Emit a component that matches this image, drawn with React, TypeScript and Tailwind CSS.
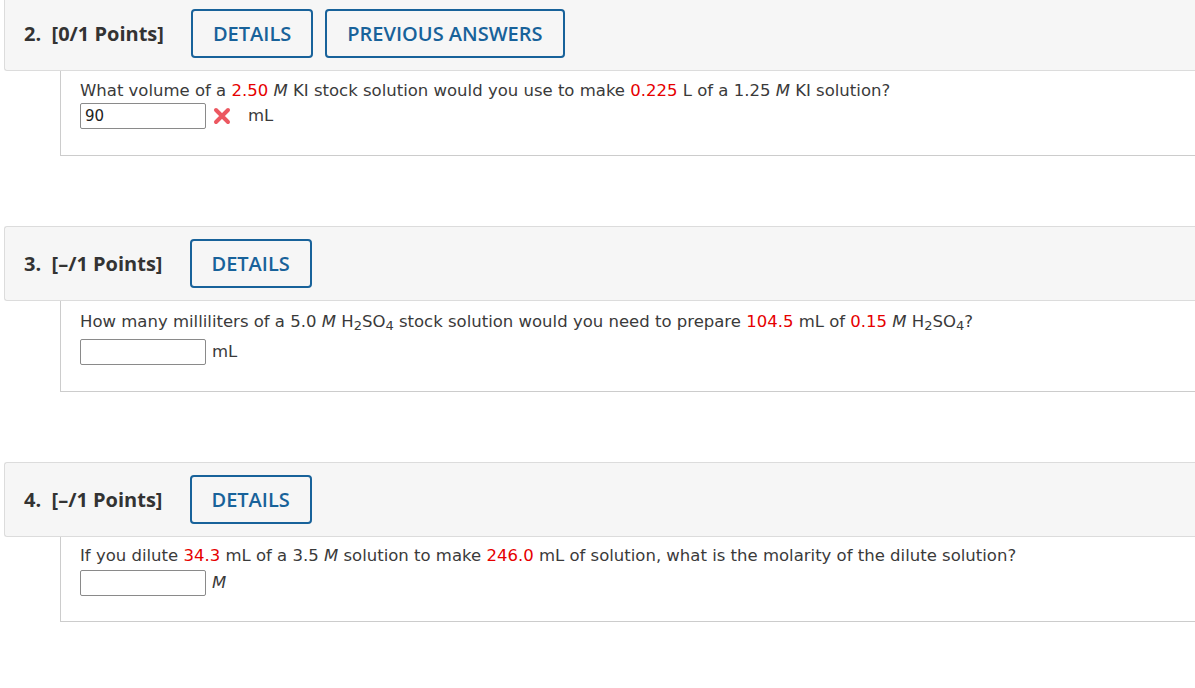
import React from 'react';

const body = { fontFamily: '"DejaVu Sans", Verdana, sans-serif' };
const head = { fontFamily: '"Open Sans", "Liberation Sans", sans-serif' };

function Red({ children }: { children: React.ReactNode }) {
  return <span className="text-[#e60000]">{children}</span>;
}

function M() {
  return <i>M</i>;
}

function H2SO4() {
  return (
    <span>
      H<sub className="text-[13px] leading-none">2</sub>SO<sub className="text-[13px] leading-none">4</sub>
    </span>
  );
}

function WrongMark() {
  return (
    <svg width="18" height="18" viewBox="0 0 18 18" className="ml-[7px]">
      <path d="M3 3 L15 15 M15 3 L3 15" stroke="#ec5861" strokeWidth="4" strokeLinecap="round" />
    </svg>
  );
}

function Header({ num, score, buttons }: { num: number; score: string; buttons: string[] }) {
  return (
    <div
      className="ml-[4px] flex h-[75px] items-center rounded-l-[3px] border border-r-0 border-[#dcdcdc] bg-[#f6f6f6] pl-[19px]"
      style={head}
    >
      <span className="text-[20px] font-bold text-[#333]">
        {num}.&nbsp; [{score} Points]
      </span>
      <div className="ml-[27px] flex gap-[12px]">
        {buttons.map((b) => (
          <button
            key={b}
            className="h-[49px] rounded-[4px] border-2 border-[#18629a] px-[20px] text-[20px] font-semibold text-[#18629a]"
          >
            {b}
          </button>
        ))}
      </div>
    </div>
  );
}

function Answer({ value, unit, wrong }: { value?: string; unit: React.ReactNode; wrong?: boolean }) {
  return (
    <div className="flex items-center">
      <div className="flex h-[26px] w-[126px] items-center rounded-[2px] border border-[#8a8a8a] bg-white pl-[4px] text-[15px] text-[#222]">
        {value}
      </div>
      {wrong && <WrongMark />}
      <span className={`text-[16.5px] ${wrong ? 'ml-[17px]' : 'ml-[6px]'}`}>{unit}</span>
    </div>
  );
}

function Question({
  num,
  score,
  buttons,
  children,
  answer,
  pt,
  gap,
  pb,
}: {
  num: number;
  score: string;
  buttons: string[];
  children: React.ReactNode;
  answer: React.ReactNode;
  pt: string;
  gap: string;
  pb: string;
}) {
  return (
    <section>
      <Header num={num} score={score} buttons={buttons} />
      <div className={`ml-[60px] border-b border-l border-[#cccccc] pl-[19px] ${pt} ${pb}`} style={body}>
        <p className={`h-[20px] text-[16.5px] leading-[20px] text-[#3a3a3a] ${gap}`}>{children}</p>
        {answer}
      </div>
    </section>
  );
}

export default function App() {
  return (
    <div className="-mt-[4px] min-h-screen overflow-hidden bg-white text-[#3a3a3a]">
      <div className="flex flex-col gap-[70px]">
        <Question
          num={2}
          score="0/1"
          buttons={['DETAILS', 'PREVIOUS ANSWERS']}
          pt="pt-[10px]"
          gap="mb-[2px]"
          pb="pb-[26px]"
          answer={<Answer value="90" unit="mL" wrong />}
        >
          What volume of a <Red>2.50</Red> <M /> KI stock solution would you use to make <Red>0.225</Red> L of a
          1.25 <M /> KI solution?
        </Question>
        <Question
          num={3}
          score="–/1"
          buttons={['DETAILS']}
          pt="pt-[11px]"
          gap="mb-[7px]"
          pb="pb-[26px]"
          answer={<Answer unit="mL" />}
        >
          How many milliliters of a 5.0 <M /> <H2SO4 /> stock solution would you need to prepare <Red>104.5</Red> mL
          of <Red>0.15</Red> <M /> <H2SO4 />?
        </Question>
        <Question
          num={4}
          score="–/1"
          buttons={['DETAILS']}
          pt="pt-[9px]"
          gap="mb-[4px]"
          pb="pb-[25px]"
          answer={<Answer unit={<M />} />}
        >
          If you dilute <Red>34.3</Red> mL of a 3.5 <M /> solution to make <Red>246.0</Red> mL of solution, what is the
          molarity of the dilute solution?
        </Question>
      </div>
    </div>
  );
}
